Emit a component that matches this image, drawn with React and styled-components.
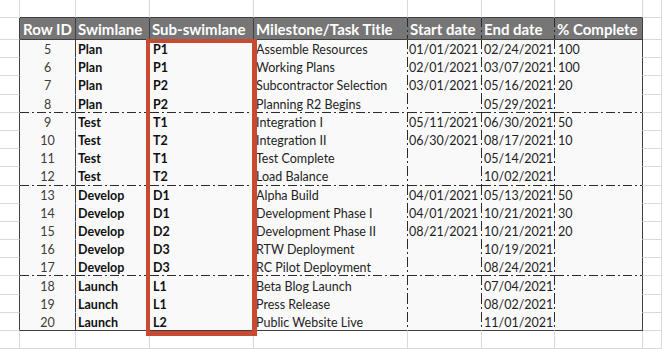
import React from 'react';
import styled, { createGlobalStyle, css } from 'styled-components';

const GRID = '#d9d9d9';
const DARK = '#3f3f3f';
const DASH = '#2b2b2b';
const BODY_BG = '#f9f9f9';
const HEAD_BG = '#767676';
const RED = '#c94a33';

const Global = createGlobalStyle`
  html, body { margin: 0; padding: 0; background: #ffffff; }
  body { font-family: Lato, "Liberation Sans", sans-serif; }
`;

const hDash = `linear-gradient(to right, ${DASH} 0 9px, transparent 9px 12px, ${DASH} 12px 14px, transparent 14px 17px) left bottom / 17px 1px repeat-x border-box`;
const vDash = `linear-gradient(to bottom, ${DASH} 0 9px, transparent 9px 12px, ${DASH} 12px 14px, transparent 14px 17px) right top / 1px 17px repeat-y border-box`;

const lineColor = (k) => (k === 'dark' ? DARK : k === 'grid' ? GRID : 'transparent');

const lines = (bg) => (p) => {
  const layers = [];
  if (p.$bottom === 'dash') layers.push(hDash);
  if (p.$right === 'dash') layers.push(vDash);
  layers.push(bg);
  return css`
    background: ${layers.join(', ')};
    border-right: 1px solid ${lineColor(p.$right)};
    border-bottom: 1px solid ${lineColor(p.$bottom)};
  `;
};

const Sheet = styled.div`
  position: relative;
  display: grid;
  grid-template-columns: 20px 56px 74px 104px 154px 74px 73px 88px 1fr;
  grid-template-rows: 18px 22px repeat(16, 18.1875px) 1fr;
  width: 662px;
  height: 349px;
  overflow: hidden;
  background: #ffffff;
`;

const SheetCell = styled.div`
  box-sizing: border-box;
  min-width: 0;
  ${lines('#ffffff')}
`;

const HeadCell = styled.div`
  box-sizing: border-box;
  min-width: 0;
  display: flex;
  align-items: center;
  justify-content: ${(p) => (p.$center ? 'center' : 'flex-start')};
  padding: 1px 0 0 ${(p) => (p.$center ? '0' : '2px')};
  overflow: hidden;
  white-space: nowrap;
  color: #ffffff;
  font-size: 15px;
  font-weight: 700;
  ${lines(HEAD_BG)}
`;

const DataCell = styled.div`
  box-sizing: border-box;
  min-width: 0;
  display: flex;
  align-items: center;
  justify-content: ${(p) => (p.$center ? 'center' : 'flex-start')};
  padding: 2px 0 0 ${(p) => (p.$center ? '0' : `${p.$indent ?? 2}px`)};
  overflow: hidden;
  white-space: nowrap;
  font-size: 12.5px;
  font-weight: ${(p) => (p.$bold ? 700 : 400)};
  color: ${(p) => (p.$muted ? '#3e3a3a' : p.$bold ? '#101010' : '#1e1e1e')};
  ${lines(BODY_BG)}
`;

const Highlight = styled.div`
  position: absolute;
  left: 146px;
  top: 39px;
  width: 111px;
  height: 297px;
  box-sizing: border-box;
  border: 4px solid ${RED};
  border-right-width: 5px;
  border-bottom-width: 5px;
  pointer-events: none;
`;

const columns = [
  { key: 'id', title: 'Row ID', center: true, sep: 'dark' },
  { key: 'lane', title: 'Swimlane', bold: true, sep: 'dark', indent: 2 },
  { key: 'sub', title: 'Sub-swimlane', bold: true, sep: 'dark', indent: 3 },
  { key: 'title', title: 'Milestone/Task Title', sep: 'dash', indent: 2 },
  { key: 'start', title: 'Start date', sep: 'dash', indent: 1 },
  { key: 'end', title: 'End date', sep: 'dash', indent: 2 },
  { key: 'pct', title: '% Complete', sep: 'dark', indent: 3 },
];

const rows = [
  [5, 'Plan', 'P1', 'Assemble Resources', '01/01/2021', '02/24/2021', '100'],
  [6, 'Plan', 'P1', 'Working Plans', '02/01/2021', '03/07/2021', '100'],
  [7, 'Plan', 'P2', 'Subcontractor Selection', '03/01/2021', '05/16/2021', '20'],
  [8, 'Plan', 'P2', 'Planning R2 Begins', '', '05/29/2021', ''],
  [9, 'Test', 'T1', 'Integration I', '05/11/2021', '06/30/2021', '50'],
  [10, 'Test', 'T2', 'Integration II', '06/30/2021', '08/17/2021', '10'],
  [11, 'Test', 'T1', 'Test Complete', '', '05/14/2021', ''],
  [12, 'Test', 'T2', 'Load Balance', '', '10/02/2021', ''],
  [13, 'Develop', 'D1', 'Alpha Build', '04/01/2021', '05/13/2021', '50'],
  [14, 'Develop', 'D1', 'Development Phase I', '04/01/2021', '10/21/2021', '30'],
  [15, 'Develop', 'D2', 'Development Phase II', '08/21/2021', '10/21/2021', '20'],
  [16, 'Develop', 'D3', 'RTW Deployment', '', '10/19/2021', ''],
  [17, 'Develop', 'D3', 'RC Pilot Deployment', '', '08/24/2021', ''],
  [18, 'Launch', 'L1', 'Beta Blog Launch', '', '07/04/2021', ''],
  [19, 'Launch', 'L1', 'Press Release', '', '08/02/2021', ''],
  [20, 'Launch', 'L2', 'Public Website Live', '', '11/01/2021', ''],
];

const groupEnds = new Set([8, 12, 17]);

export default function App() {
  return (
    <>
      <Global />
      <Sheet>
        {/* spreadsheet row above the table */}
        <SheetCell $right="grid" $bottom="grid" />
        {columns.map((c) => (
          <SheetCell key={`top-${c.key}`} $right="grid" $bottom="dark" />
        ))}
        <SheetCell $right="grid" $bottom="grid" />

        {/* header row */}
        <SheetCell $right="dark" $bottom="grid" />
        {columns.map((c) => (
          <HeadCell key={`h-${c.key}`} $center={c.center} $right={c.sep} $bottom="dark">
            {c.title}
          </HeadCell>
        ))}
        <SheetCell $right="grid" $bottom="grid" />

        {/* data rows */}
        {rows.map((r, i) => {
          const id = r[0];
          const bottom = i === rows.length - 1 ? 'dark' : groupEnds.has(id) ? 'dash' : 'none';
          return (
            <React.Fragment key={id}>
              <SheetCell $right="dark" $bottom="grid" />
              {columns.map((c, ci) => (
                <DataCell
                  key={c.key}
                  $center={c.center}
                  $bold={c.bold}
                  $muted={ci === 0}
                  $indent={c.indent}
                  $right={c.sep}
                  $bottom={bottom}
                >
                  {r[ci]}
                </DataCell>
              ))}
              <SheetCell $right="grid" $bottom="grid" />
            </React.Fragment>
          );
        })}

        {/* spreadsheet row below the table */}
        <SheetCell $right="grid" $bottom="grid" />
        {columns.map((c) => (
          <SheetCell key={`bot-${c.key}`} $right="grid" $bottom="grid" />
        ))}
        <SheetCell $right="grid" $bottom="grid" />

        <Highlight />
      </Sheet>
    </>
  );
}
